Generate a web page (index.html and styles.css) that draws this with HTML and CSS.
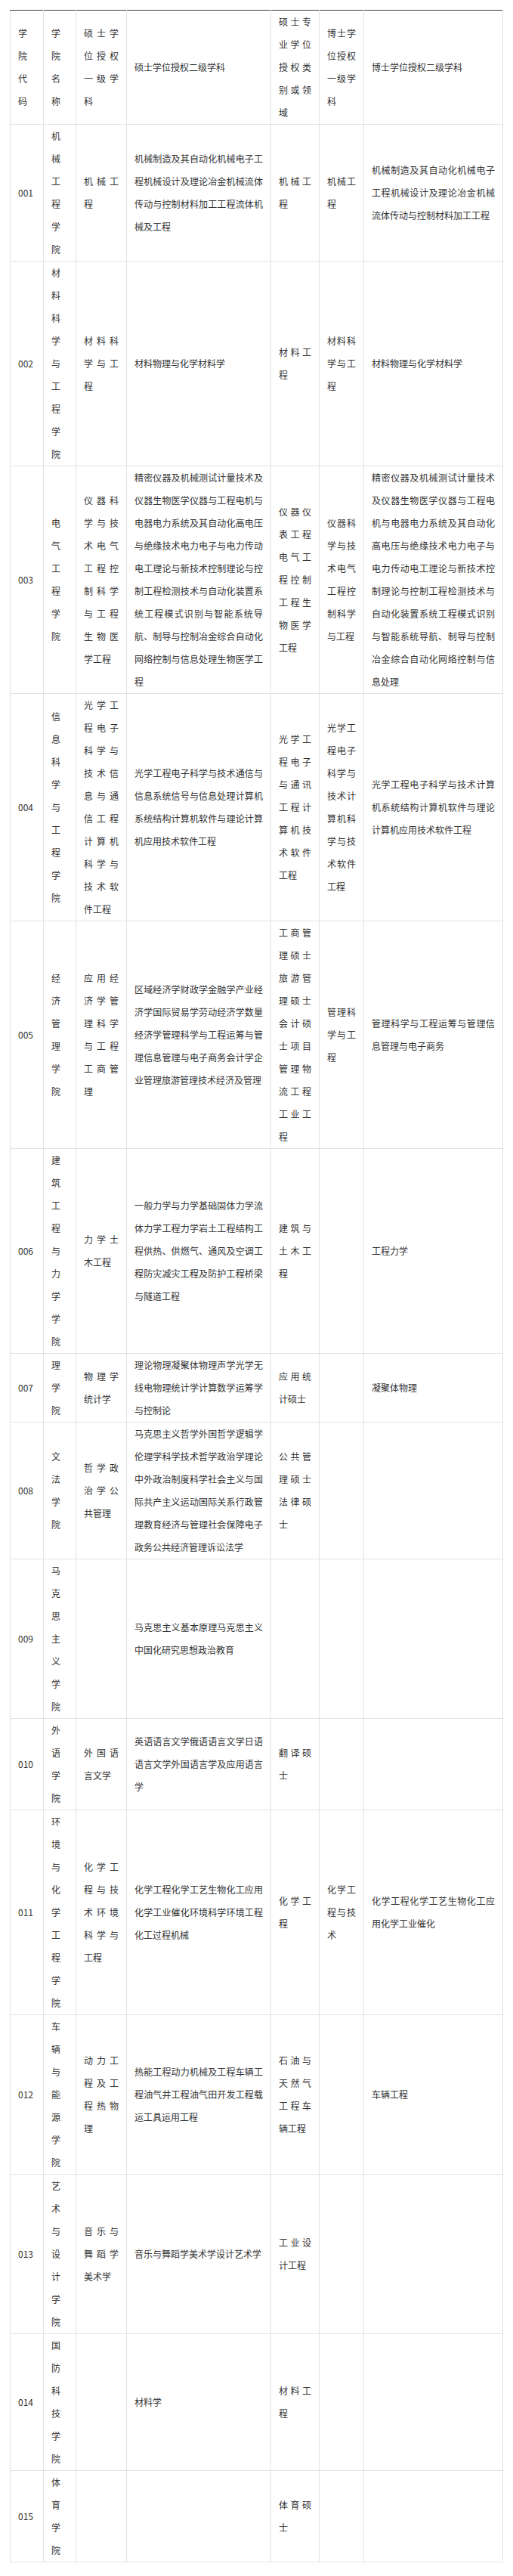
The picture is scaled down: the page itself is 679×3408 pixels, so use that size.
FILE: index.html
```html
<!DOCTYPE html>
<html lang="zh-CN">
<head>
<meta charset="utf-8">
<title>学位授权学科一览</title>
<link rel="stylesheet" href="styles.css">
</head>
<body>
<div class="page">
<table class="grid">
<colgroup>
<col class="c1"><col class="c2"><col class="c3"><col class="c4"><col class="c5"><col class="c6"><col class="c7">
</colgroup>
<thead>
<tr>
<td>学院代码</td><td>学院名称</td><td>硕士学位授权一级学科</td><td>硕士学位授权二级学科</td><td>硕士专业学位授权类别或领域</td><td>博士学位授权一级学科</td><td>博士学位授权二级学科</td>
</tr>
</thead>
<tbody>
<tr>
<td>001</td><td>机械工程学院</td><td>机械工程</td><td>机械制造及其自动化机械电子工程机械设计及理论冶金机械流体传动与控制材料加工工程流体机械及工程</td><td>机械工程</td><td>机械工程</td><td>机械制造及其自动化机械电子工程机械设计及理论冶金机械流体传动与控制材料加工工程</td>
</tr>
<tr>
<td>002</td><td>材料科学与工程学院</td><td>材料科学与工程</td><td>材料物理与化学材料学</td><td>材料工程</td><td>材料科学与工程</td><td>材料物理与化学材料学</td>
</tr>
<tr>
<td>003</td><td>电气工程学院</td><td>仪器科学与技术电气工程控制科学与工程生物医学工程</td><td>精密仪器及机械测试计量技术及仪器生物医学仪器与工程电机与电器电力系统及其自动化高电压与绝缘技术电力电子与电力传动电工理论与新技术控制理论与控制工程检测技术与自动化装置系统工程模式识别与智能系统导航、制导与控制冶金综合自动化网络控制与信息处理生物医学工程</td><td>仪器仪表工程电气工程控制工程生物医学工程</td><td>仪器科学与技术电气工程控制科学与工程</td><td>精密仪器及机械测试计量技术及仪器生物医学仪器与工程电机与电器电力系统及其自动化高电压与绝缘技术电力电子与电力传动电工理论与新技术控制理论与控制工程检测技术与自动化装置系统工程模式识别与智能系统导航、制导与控制冶金综合自动化网络控制与信息处理</td>
</tr>
<tr>
<td>004</td><td>信息科学与工程学院</td><td>光学工程电子科学与技术信息与通信工程计算机科学与技术软件工程</td><td>光学工程电子科学与技术通信与信息系统信号与信息处理计算机系统结构计算机软件与理论计算机应用技术软件工程</td><td>光学工程电子与通讯工程计算机技术软件工程</td><td>光学工程电子科学与技术计算机科学与技术软件工程</td><td>光学工程电子科学与技术计算机系统结构计算机软件与理论计算机应用技术软件工程</td>
</tr>
<tr>
<td>005</td><td>经济管理学院</td><td>应用经济学管理科学与工程工商管理</td><td>区域经济学财政学金融学产业经济学国际贸易学劳动经济学数量经济学管理科学与工程运筹与管理信息管理与电子商务会计学企业管理旅游管理技术经济及管理</td><td>工商管理硕士旅游管理硕士会计硕士项目管理物流工程工业工程</td><td>管理科学与工程</td><td>管理科学与工程运筹与管理信息管理与电子商务</td>
</tr>
<tr>
<td>006</td><td>建筑工程与力学学院</td><td>力学土木工程</td><td>一般力学与力学基础固体力学流体力学工程力学岩土工程结构工程供热、供燃气、通风及空调工程防灾减灾工程及防护工程桥梁与隧道工程</td><td>建筑与土木工程</td><td></td><td>工程力学</td>
</tr>
<tr>
<td>007</td><td>理学院</td><td>物理学统计学</td><td>理论物理凝聚体物理声学光学无线电物理统计学计算数学运筹学与控制论</td><td>应用统计硕士</td><td></td><td>凝聚体物理</td>
</tr>
<tr>
<td>008</td><td>文法学院</td><td>哲学政治学公共管理</td><td>马克思主义哲学外国哲学逻辑学伦理学科学技术哲学政治学理论中外政治制度科学社会主义与国际共产主义运动国际关系行政管理教育经济与管理社会保障电子政务公共经济管理诉讼法学</td><td>公共管理硕士法律硕士</td><td></td><td></td>
</tr>
<tr>
<td>009</td><td>马克思主义学院</td><td></td><td>马克思主义基本原理马克思主义中国化研究思想政治教育</td><td></td><td></td><td></td>
</tr>
<tr>
<td>010</td><td>外语学院</td><td>外国语言文学</td><td>英语语言文学俄语语言文学日语语言文学外国语言学及应用语言学</td><td>翻译硕士</td><td></td><td></td>
</tr>
<tr>
<td>011</td><td>环境与化学工程学院</td><td>化学工程与技术环境科学与工程</td><td>化学工程化学工艺生物化工应用化学工业催化环境科学环境工程化工过程机械</td><td>化学工程</td><td>化学工程与技术</td><td>化学工程化学工艺生物化工应用化学工业催化</td>
</tr>
<tr>
<td>012</td><td>车辆与能源学院</td><td>动力工程及工程热物理</td><td>热能工程动力机械及工程车辆工程油气井工程油气田开发工程载运工具运用工程</td><td>石油与天然气工程车辆工程</td><td></td><td>车辆工程</td>
</tr>
<tr>
<td>013</td><td>艺术与设计学院</td><td>音乐与舞蹈学美术学</td><td>音乐与舞蹈学美术学设计艺术学</td><td>工业设计工程</td><td></td><td></td>
</tr>
<tr>
<td>014</td><td>国防科技学院</td><td></td><td>材料学</td><td>材料工程</td><td></td><td></td>
</tr>
<tr>
<td>015</td><td>体育学院</td><td></td><td></td><td>体育硕士</td><td></td><td></td>
</tr>
</tbody>
</table>
</div>
</body>
</html>
```
FILE: styles.css
```css
html, body {
  margin: 0;
  padding: 0;
  background: #ffffff;
}

.page {
  padding: 13px 14px 0 13px;
  font-family: "Noto Sans CJK SC", "Noto Sans", sans-serif;
  font-size: 12px;
  line-height: 30px;
  color: #333333;
}

.grid {
  width: 652px;
  table-layout: fixed;
  border-collapse: collapse;
  border-top: 1px solid #3a3a3a;
}

.c1 { width: 44px; }
.c2 { width: 43px; }
.c3 { width: 67px; }
.c4 { width: 191px; }
.c5 { width: 64px; }
.c6 { width: 59px; }
.c7 { width: 184px; }

.grid td {
  border: 1px solid #e2e2e2;
  padding: 0 10px;
  vertical-align: middle;
  text-align: justify;
  word-break: break-all;
}

.grid thead td {
  border-top: 1px solid #3a3a3a;
}
```
